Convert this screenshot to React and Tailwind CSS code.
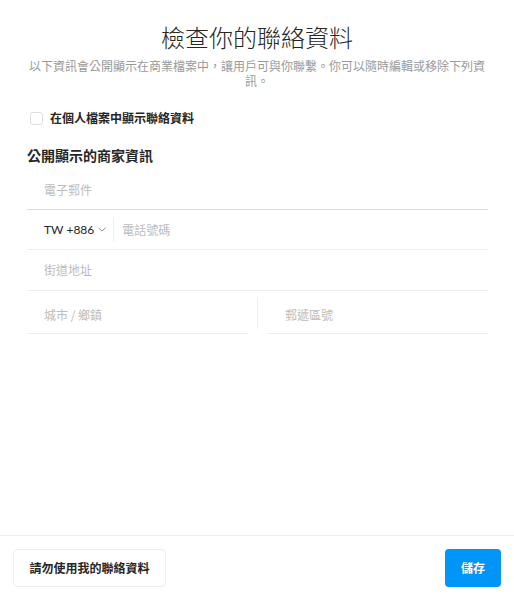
import React, { useState } from 'react';

const cjk = { fontFamily: '"Noto Sans CJK TC", "Noto Sans", sans-serif' };

export default function App() {
    const [showContact, setShowContact] = useState(false);

    return (
        <div
            className="w-[514px] h-[600px] flex flex-col bg-white text-[#262626]"
            style={cjk}
        >
            {/* Header */}
            <h1 className="mt-[21px] text-center text-[24px] leading-[32px] font-light">
                檢查你的聯絡資料
            </h1>
            <p className="mt-[5px] px-[27px] text-center text-[12px] leading-[15px] text-[#9a9a9a]">
                以下資訊會公開顯示在商業檔案中，讓用戶可與你聯繫。你可以隨時編輯或移除下列資訊。
            </p>

            {/* Checkbox */}
            <label className="mt-[22px] ml-[30px] flex items-center gap-[7px] h-4 cursor-pointer">
                <span
                    className={`w-[13px] h-[13px] rounded-[3px] border ${showContact ? 'bg-[#0095f6] border-[#0095f6]' : 'border-[#dedede] bg-white'}`}
                    onClick={() => setShowContact(v => !v)}
                />
                <span className="text-[12px] font-bold leading-4">在個人檔案中顯示聯絡資料</span>
            </label>

            {/* Section */}
            <div className="px-[27px] pr-[26px]">
                <h2 className="mt-[20px] text-[14px] leading-[18px] font-bold">公開顯示的商家資訊</h2>

                <div className="mt-[6px] h-[40px] flex items-center pl-[17px] border-b border-[#dbdbdb]">
                    <span className="text-[12px] text-[#bcbcbc]">電子郵件</span>
                </div>

                <div className="h-[40px] flex items-center pl-[17px] border-b border-[#efefef]">
                    <span
                        className="text-[12px] text-[#262626]"
                        style={{ fontFamily: '"Lato", "Liberation Sans", sans-serif' }}
                    >
                        TW +886
                    </span>
                    <svg className="ml-[4px]" width="8" height="5" viewBox="0 0 8 5" fill="none">
                        <path d="M0.5 0.8 L4 4 L7.5 0.8" stroke="#8e8e8e" strokeWidth="1" />
                    </svg>
                    <div className="ml-[7px] w-px h-[25px] bg-[#efefef]" />
                    <span className="ml-[8px] text-[12px] text-[#bcbcbc]">電話號碼</span>
                </div>

                <div className="h-[41px] flex items-center pl-[17px] border-b border-[#efefef]">
                    <span className="text-[12px] text-[#bcbcbc]">街道地址</span>
                </div>

                <div className="grid grid-cols-[1fr_19px_1fr] h-[43px]">
                    <div className="flex items-center pl-[17px] pt-[5px] border-b border-[#efefef]">
                        <span className="text-[12px] text-[#bcbcbc]">城市 / 鄉鎮</span>
                    </div>
                    <div className="flex justify-center pt-[6px]">
                        <div className="w-px h-[32px] bg-[#efefef]" />
                    </div>
                    <div className="flex items-center pl-[18px] pt-[5px] border-b border-[#efefef]">
                        <span className="text-[12px] text-[#bcbcbc]">郵遞區號</span>
                    </div>
                </div>
            </div>

            <div className="flex-1" />

            {/* Footer */}
            <div className="border-t border-[#efefef] px-[13px] pt-[13px] pb-[13px] flex justify-between">
                <button className="h-[38px] w-[153px] rounded-[4px] border border-[#efefef] bg-white text-[12px] font-bold text-[#262626]">
                    請勿使用我的聯絡資料
                </button>
                <button className="h-[38px] w-[56px] rounded-[4px] bg-[#0095f6] text-[12px] font-bold text-white">
                    儲存
                </button>
            </div>
        </div>
    );
}
